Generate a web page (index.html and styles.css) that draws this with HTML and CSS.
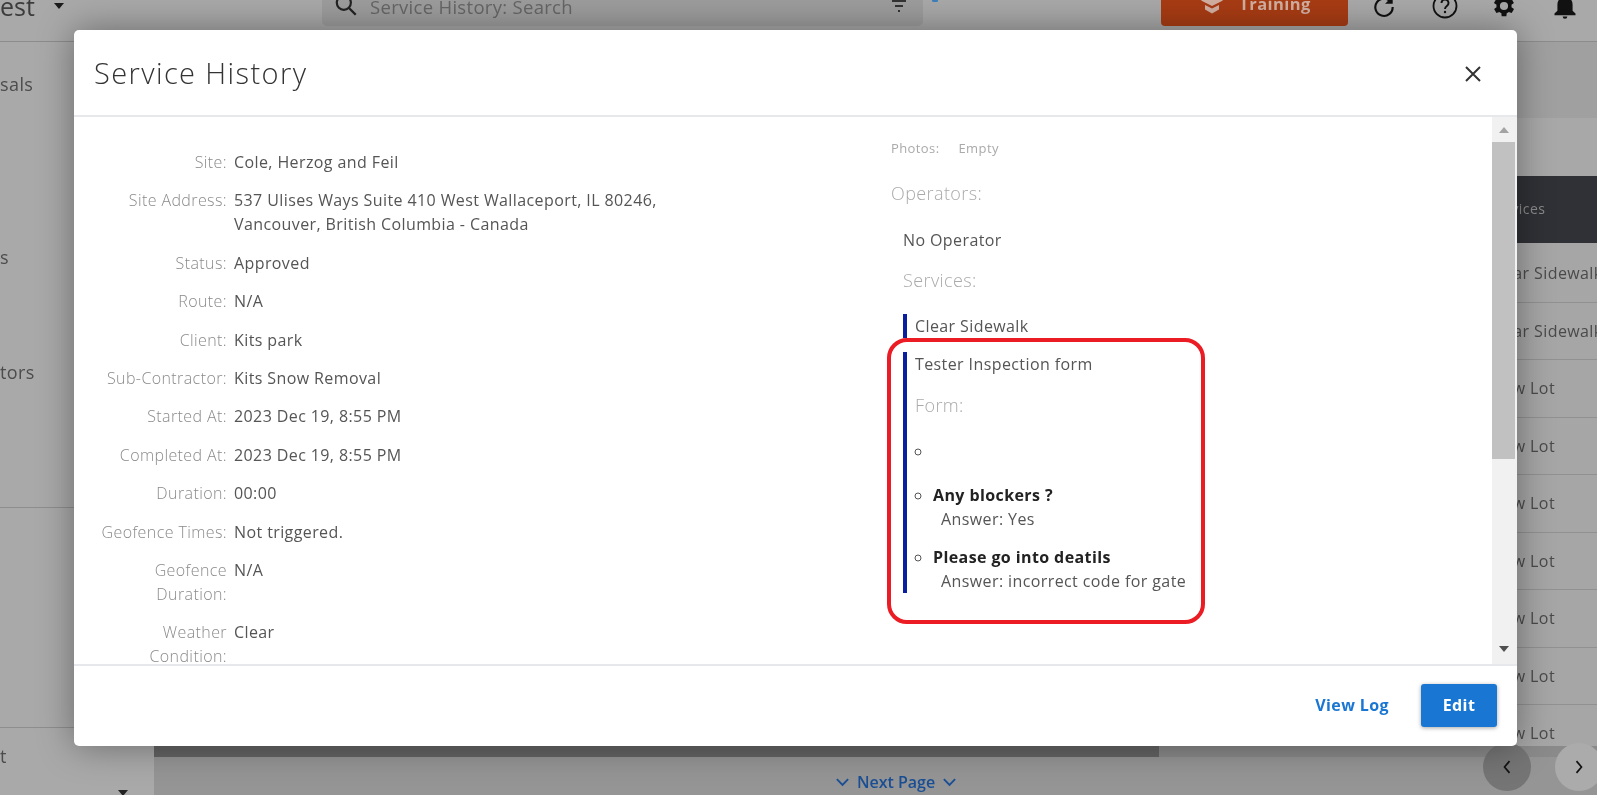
FILE: index.html
```
<!DOCTYPE html>
<html lang="en">
<head>
<meta charset="utf-8">
<title>Service History</title>
<link rel="stylesheet" href="styles.css">
</head>
<body>
<div class="page">
  <header class="topbar">
    <div class="org">est</div>
    <div class="org-caret"></div>
    <div class="search">
      <svg class="search-icon" viewBox="0 0 24 24" width="26" height="26"><circle cx="10" cy="10" r="6.5" fill="none" stroke="#222" stroke-width="2"/><path d="M15 15l6 6" stroke="#222" stroke-width="2.2" fill="none"/></svg>
      <span class="search-text">Service History: Search</span>
      <svg class="filter-icon" viewBox="0 0 24 24" width="24" height="24"><path d="M5 7h14M8 12h8M11 17h2" stroke="#333" stroke-width="2.2" fill="none"/></svg>
    </div>
    <div class="blue-dot"></div>
    <div class="training">
      <svg viewBox="0 0 28 24" width="28" height="24"><path d="M14 3L3 8.5 14 14l11-5.5z" fill="#d2b0a2"/><path d="M7 13v4.5l7 4 7-4V13l-7 3.6z" fill="#d2b0a2"/></svg>
      <span>Training</span>
    </div>
    <svg class="top-icon refresh" viewBox="0 0 24 24" width="26" height="26"><path d="M18.5 8.5A8 8 0 1 0 20 13" fill="none" stroke="#111" stroke-width="2"/><path d="M20 3v7h-7z" fill="#111"/></svg>
    <svg class="top-icon help" viewBox="0 0 26 26" width="26" height="26"><circle cx="13" cy="13" r="11.5" fill="none" stroke="#111" stroke-width="1.8"/><path d="M9.5 10a3.5 3.5 0 1 1 5.6 2.8c-1.3 1-2.1 1.6-2.1 3.2" fill="none" stroke="#111" stroke-width="1.9"/><circle cx="13" cy="19" r="1.2" fill="#111"/></svg>
    <svg class="top-icon gear" viewBox="0 0 24 24" width="28" height="28"><path fill="#111" fill-rule="evenodd" d="M19.4 13a7.5 7.5 0 0 0 0-2l2.1-1.6-2-3.5-2.5 1a7.4 7.4 0 0 0-1.7-1L15 3.2h-4l-.4 2.7a7.4 7.4 0 0 0-1.7 1l-2.5-1-2 3.5L6.600 11a7.500 7.500 0 0 0 0 2l-2.100 1.600 2 3.500 2.500-1a7.400 7.400 0 0 0 1.700 1l.3 2.700h4l.4-2.700a7.400 7.400 0 0 0 1.700-1l2.500 1 2-3.500zM13 15.500a3.500 3.500 0 1 1 0-7 3.500 3.500 0 0 1 0 7z" transform="translate(-1 0)"/></svg>
    <svg class="top-icon bell" viewBox="0 0 24 24" width="28" height="28"><path fill="#111" d="M12 2a2 2 0 0 0-2 2v.6A6.500 6.500 0 0 0 5.500 11v5L3 18.500V20h18v-1.500L18.500 16v-5A6.500 6.500 0 0 0 14 4.600V4a2 2 0 0 0-2-2zM10 21a2 2 0 0 0 4 0z"/></svg>
  </header>

  <div class="workspace">
    <nav class="side">
      <div class="nav-row">sals</div>
      <div class="nav-row"></div>
      <div class="nav-row"></div>
      <div class="nav-row">s</div>
      <div class="nav-row"></div>
      <div class="nav-row">tors</div>
      <div class="nav-block"></div>
      <div class="nav-foot">t</div>
      <div class="nav-caret"></div>
    </nav>
    <main class="main">
      <div class="band"></div>
      <div class="band-light"></div>
      <div class="table">
        <div class="th">Services</div>
        <div class="td">Clear Sidewalk</div>
        <div class="td">Clear Sidewalk</div>
        <div class="td">View Lot</div>
        <div class="td">View Lot</div>
        <div class="td">View Lot</div>
        <div class="td">View Lot</div>
        <div class="td">View Lot</div>
        <div class="td">View Lot</div>
        <div class="td">View Lot</div>
      </div>
      <div class="hscroll"><div class="hthumb"></div></div>
      <div class="pager">
        <div class="next-page">
          <svg viewBox="0 0 16 10" width="15" height="10"><path d="M2 2l6 6 6-6" fill="none" stroke="#1a4f95" stroke-width="2"/></svg>
          <span>Next Page</span>
          <svg viewBox="0 0 16 10" width="15" height="10"><path d="M2 2l6 6 6-6" fill="none" stroke="#1a4f95" stroke-width="2"/></svg>
        </div>
      </div>
    </main>
  </div>

  <div class="circle prev"><svg viewBox="0 0 12 20" width="10" height="18"><path d="M9 3L3 10l6 7" fill="none" stroke="#111" stroke-width="2"/></svg></div>
  <div class="circle next"><svg viewBox="0 0 12 20" width="10" height="18"><path d="M3 3l6 7-6 7" fill="none" stroke="#111" stroke-width="2"/></svg></div>

  <section class="modal">
    <div class="modal-head">
      <h1 class="modal-title">Service History</h1>
      <svg class="close" viewBox="0 0 18 18" width="18" height="18"><path d="M2 2l14 14M16 2L2 16" stroke="#333" stroke-width="2" fill="none"/></svg>
    </div>
    <div class="modal-body">
      <div class="content">
        <div class="details">
          <div class="row"><div class="label">Site:</div><div class="value">Cole, Herzog and Feil</div></div>
          <div class="row"><div class="label">Site Address:</div><div class="value">537 Ulises Ways Suite 410 West Wallaceport, IL 80246, Vancouver, British Columbia - Canada</div></div>
          <div class="row"><div class="label">Status:</div><div class="value">Approved</div></div>
          <div class="row"><div class="label">Route:</div><div class="value">N/A</div></div>
          <div class="row"><div class="label">Client:</div><div class="value">Kits park</div></div>
          <div class="row"><div class="label">Sub-Contractor:</div><div class="value">Kits Snow Removal</div></div>
          <div class="row"><div class="label">Started At:</div><div class="value">2023 Dec 19, 8:55 PM</div></div>
          <div class="row"><div class="label">Completed At:</div><div class="value">2023 Dec 19, 8:55 PM</div></div>
          <div class="row"><div class="label">Duration:</div><div class="value">00:00</div></div>
          <div class="row"><div class="label">Geofence Times:</div><div class="value">Not triggered.</div></div>
          <div class="row"><div class="label">Geofence Duration:</div><div class="value">N/A</div></div>
          <div class="row"><div class="label">Weather Condition:</div><div class="value">Clear</div></div>
        </div>
        <div class="extra">
          <div class="photos"><span>Photos:</span><span>Empty</span></div>
          <h2 class="section-title">Operators:</h2>
          <div class="indented">
            <div class="no-op">No Operator</div>
            <h2 class="section-title services-title">Services:</h2>
            <div class="service service-first">Clear Sidewalk</div>
            <div class="service service-form">
              <div>Tester Inspection form</div>
              <h3 class="section-title form-title">Form:</h3>
              <ul class="answers">
                <li class="blank">&nbsp;</li>
                <li><strong>Any blockers ?</strong><div class="answer">Answer: Yes</div></li>
                <li><strong>Please go into deatils</strong><div class="answer">Answer: incorrect code for gate</div></li>
              </ul>
              <div class="highlight"></div>
            </div>
          </div>
        </div>
      </div>
      <div class="scrollbar">
        <div class="arrow-up"></div>
        <div class="thumb"></div>
        <div class="arrow-down"></div>
      </div>
    </div>
    <div class="modal-foot">
      <span class="view-log">View Log</span>
      <span class="edit">Edit</span>
    </div>
  </section>
</div>
</body>
</html>
```
FILE: styles.css
```
* { box-sizing: border-box; }
html, body { margin: 0; height: 100%; overflow: hidden; }
body { font-family: "Open Sans", "Liberation Sans", sans-serif; font-size: 16px; color: #555; letter-spacing: 0.4px; }

.page {
  position: relative;
  width: 1597px;
  height: 795px;
  overflow: hidden;
  background: #a8a8a8;
  display: flex;
  flex-direction: column;
  filter: blur(0.4px);
}

/* Top bar, its upper part scrolled out of the capture */
.topbar {
  flex: none;
  height: 71px;
  margin-top: -29px;
  display: flex;
  align-items: center;
  border-bottom: 1px solid #8c8c8c;
  background: #a9a9a9;
}
.org { font-size: 25px; color: #3c3c3c; width: 54px; letter-spacing: 0; }
.org-caret { width: 0; height: 0; border-left: 5px solid transparent; border-right: 5px solid transparent; border-top: 6px solid #1c1c1c; }
.search {
  margin-left: 258px;
  width: 601px;
  height: 40px;
  border-radius: 5px;
  background: #9d9d9d;
  display: flex;
  align-items: center;
  padding-left: 11px;
}
.search-icon { margin-top: -2px; }
.search-text { margin-left: 11px; color: #666; font-size: 18.5px; letter-spacing: 0.3px; flex: 1; }
.filter-icon { margin-right: 12px; }
.blue-dot { align-self: flex-start; margin: 28px 0 0 9px; width: 6px; height: 3px; border-radius: 2px; background: #3e7fbc; }
.training {
  margin-left: 223px;
  width: 187px;
  height: 40px;
  padding-bottom: 5px;
  border-radius: 4px;
  background: #a83c14;
  color: #d2b0a2;
  font-weight: 700;
  font-size: 16.5px;
  display: flex;
  align-items: center;
  justify-content: center;
  gap: 13px;
}
.top-icon { flex: none; }
.refresh { margin-left: 23px; }
.help { margin-left: 35px; }
.gear { margin-left: 32px; }
.bell { margin-left: 33px; }

.workspace { flex: 1; min-height: 0; display: flex; }

.side {
  flex: none;
  width: 154px;
  display: flex;
  flex-direction: column;
  padding-top: 14px;
  background: #a9a9a9;
  font-size: 18px;
  color: #4c4c4c;
}
.nav-row { height: 57.5px; line-height: 57.5px; flex: none; }
.nav-block {
  flex: none;
  height: 221px;
  margin-top: 106px;
  border-top: 1px solid #8e8e8e;
  border-bottom: 1px solid #8e8e8e;
}
.nav-foot { flex: none; margin-top: 16px; line-height: 24px; }
.nav-caret { align-self: flex-end; margin: 22px 26px 0 0; width: 0; height: 0; border-left: 5px solid transparent; border-right: 5px solid transparent; border-top: 6px solid #222; }

.main { flex: 1; min-width: 0; display: flex; flex-direction: column; background: #a6a6a6; }
.band { flex: none; height: 76px; background: #a0a0a0; }
.band-light { flex: none; height: 58px; background: #a8a8a8; }
.table {
  flex: 1;
  min-height: 0;
  overflow: hidden;
  padding-left: 1335px;
  white-space: nowrap;
  color: #4a4a4a;
  font-size: 16px;
}
.th {
  height: 67px;
  margin-bottom: 2px;
  margin-left: -110px;
  padding-left: 110px;
  line-height: 66px;
  background: #303136;
  color: #8b8b8b;
  font-size: 14px;
}
.td { height: 57.5px; line-height: 57.5px; border-bottom: 1px solid #919191; overflow: hidden; }

.hscroll { flex: none; height: 11px; background: #8a8a8a; }
.hthumb { width: 1005px; height: 100%; background: #646464; }
.pager { flex: none; height: 38px; background: #959595; display: flex; justify-content: center; align-items: center; padding-left: 41px; padding-top: 12px; }
.next-page { display: flex; align-items: center; gap: 7px; color: #1a4f95; font-weight: 600; font-size: 16px; letter-spacing: 0; }

.circle { position: absolute; top: 743px; height: 48px; width: 48px; border-radius: 50%; display: flex; align-items: center; justify-content: center; }
.prev { left: 1483px; background: #757575; }
.next { left: 1555px; background: #ababab; }

/* Modal */
.modal {
  position: absolute;
  left: 74px;
  top: 30px;
  width: 1443px;
  height: 716px;
  border-radius: 5px;
  background: #fff;
  box-shadow: 0 0 36px rgba(0, 0, 0, 0.38);
  display: flex;
  flex-direction: column;
  overflow: hidden;
}
.modal-head {
  flex: none;
  height: 87px;
  border-bottom: 2px solid #e6e8ec;
  display: flex;
  align-items: center;
  justify-content: space-between;
  padding: 0 35px 0 20px;
}
.modal-title { margin: 0; font-size: 29px; font-weight: 300; letter-spacing: 1.4px; color: #333; }
.close { flex: none; margin-top: 2px; }

.modal-body { flex: 1; min-height: 0; display: flex; }
.content { flex: 1; min-width: 0; display: flex; overflow: hidden; }

.details {
  flex: none;
  width: 817px;
  padding: 33px 0 0 23px;
  display: flex;
  flex-direction: column;
  gap: 14.4px;
  line-height: 24px;
}
.row { flex: none; display: flex; }
.label { flex: none; width: 130px; text-align: right; color: #8a8a8a; font-weight: 300; }
.value { width: 440px; margin-left: 7px; color: #555; }

.extra { flex: 1; padding-top: 22px; line-height: 24px; }
.photos { display: flex; gap: 19px; font-size: 13px; line-height: 18px; color: #aaa; }
.section-title { margin: 23px 0 0; font-size: 18px; line-height: 26px; font-weight: 300; color: #aaa; }
.indented { padding: 22px 0 0 12px; }
.no-op { color: #555; }
.services-title { margin-top: 15px; }
.service { border-left: 4px solid #0a1ea0; padding-left: 8px; color: #555; }
.service-first { margin-top: 21px; }
.service-form { position: relative; margin-top: 14px; width: 290px; }
.form-title { margin-top: 16px; }
.answers { list-style: circle; margin: 21px 0 0; padding: 0 0 0 18px; }
.answers li { margin-bottom: 14px; }
.answers li:last-child { margin-bottom: 0; }
.answers .blank { margin-bottom: 20px; }
.answers strong { color: #222; font-weight: 700; }
.answer { padding-left: 8px; }
.highlight {
  position: absolute;
  left: -20px;
  top: -14px;
  width: 318px;
  height: 286px;
  border: 4px solid #ec1c24;
  border-radius: 20px;
  pointer-events: none;
}

.scrollbar { flex: none; width: 25px; background: #f1f1f1; display: flex; flex-direction: column; align-items: center; padding-right: 2px; }
.arrow-up { flex: none; margin-top: 10px; width: 0; height: 0; border-left: 5px solid transparent; border-right: 5px solid transparent; border-bottom: 6px solid #a3a3a3; }
.thumb { flex: none; width: 100%; height: 317px; margin-top: 9px; background: #c1c1c1; }
.arrow-down { flex: none; margin-top: 187px; width: 0; height: 0; border-left: 5px solid transparent; border-right: 5px solid transparent; border-top: 6px solid #505050; }

.modal-foot {
  flex: none;
  height: 82px;
  border-top: 2px solid #e6e8ec;
  display: flex;
  align-items: center;
  justify-content: flex-end;
  padding: 0 20px 2px 0;
}
.view-log { color: #1976d2; font-weight: 700; font-size: 16px; margin-right: 32px; }
.edit {
  width: 76px;
  height: 43px;
  border-radius: 3px;
  background: #1976d2;
  color: #fff;
  font-weight: 700;
  font-size: 16px;
  display: flex;
  align-items: center;
  justify-content: center;
  box-shadow: 0 1px 4px rgba(0, 0, 0, 0.35);
}
```
